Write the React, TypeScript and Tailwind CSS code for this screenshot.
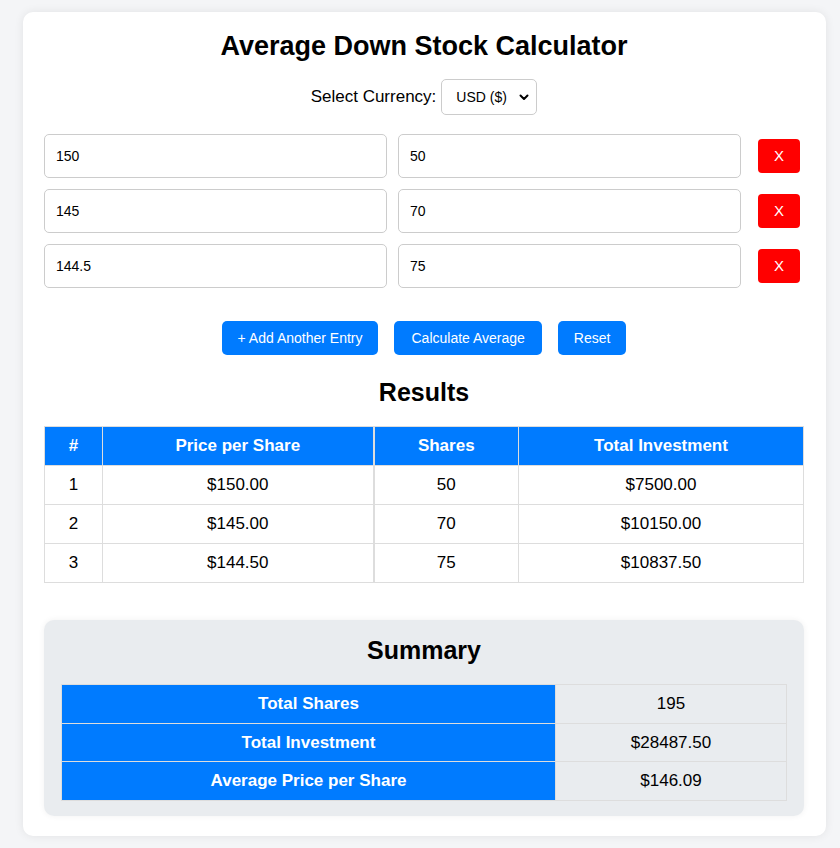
import React from 'react';

const entries = [
  { price: '150', shares: '50' },
  { price: '145', shares: '70' },
  { price: '144.5', shares: '75' },
];

const results = [
  { n: 1, price: '$150.00', shares: 50, total: '$7500.00' },
  { n: 2, price: '$145.00', shares: 70, total: '$10150.00' },
  { n: 3, price: '$144.50', shares: 75, total: '$10837.50' },
];

const summary = [
  { label: 'Total Shares', value: '195' },
  { label: 'Total Investment', value: '$28487.50' },
  { label: 'Average Price per Share', value: '$146.09' },
];

export default function App() {
  return (
    <div
      className="min-h-[848px] bg-[#f4f5f7] pt-[12px] pb-[12px] text-black"
      style={{ fontFamily: '"Liberation Sans", Arial, sans-serif' }}
    >
      <div className="ml-[23px] w-[803px] bg-white rounded-[10px] shadow-[0_0_10px_rgba(0,0,0,0.08)] pl-[21px] pr-[22px] pt-[20px] pb-[20px]">
        <h1 className="text-center text-[27px] font-bold leading-[28px]">Average Down Stock Calculator</h1>

        <div className="flex items-center justify-center gap-[5px] mt-[19px]">
          <span className="text-[17px]">Select Currency:</span>
          <div className="flex items-center justify-between w-[96px] h-[36px] border border-[#ccc] rounded-[5px] pl-[14px] pr-[6px] text-[14px]">
            <span>USD ($)</span>
            <svg width="12" height="12" viewBox="0 0 24 24" fill="none" stroke="black" strokeWidth="4" strokeLinecap="round" strokeLinejoin="round">
              <path d="M5 9l7 7 7-7" />
            </svg>
          </div>
        </div>

        {/* entry rows */}
        <div className="flex flex-col gap-[11px] mt-[19px]">
          {entries.map((e, i) => (
            <div key={i} className="flex items-center pr-[4px]">
              <div className="flex-1 h-[44px] border border-[#ccc] rounded-[5px] flex items-center px-[11px] text-[14px]">{e.price}</div>
              <div className="flex-1 h-[44px] border border-[#ccc] rounded-[5px] flex items-center px-[11px] text-[14px] ml-[11px]">{e.shares}</div>
              <button className="ml-[17px] w-[42px] h-[34px] bg-[#ff0000] text-white rounded-[4px] text-[15px] shrink-0">X</button>
            </div>
          ))}
        </div>

        <div className="flex justify-center gap-[16px] mt-[33px]">
          <button className="h-[34px] px-[16px] bg-[#007bff] text-white text-[14px] rounded-[5px]">+ Add Another Entry</button>
          <button className="h-[34px] px-[17px] bg-[#007bff] text-white text-[14px] rounded-[5px]">Calculate Average</button>
          <button className="h-[34px] px-[16px] bg-[#007bff] text-white text-[14px] rounded-[5px]">Reset</button>
        </div>

        <h2 className="text-center text-[25px] font-bold mt-[23px] leading-[28px]">Results</h2>

        <table className="w-full border-collapse mt-[20px] text-[17px]">
          <thead>
            <tr className="bg-[#007bff] text-white h-[39px]">
              <th className="border border-[#ddd] w-[58px]">#</th>
              <th className="border border-[#ddd] w-[271px]">Price per Share</th>
              <th className="border border-[#ddd] border-l-2 w-[145px]">Shares</th>
              <th className="border border-[#ddd]">Total Investment</th>
            </tr>
          </thead>
          <tbody>
            {results.map((r) => (
              <tr key={r.n} className="h-[39px] text-center">
                <td className="border border-[#ddd]">{r.n}</td>
                <td className="border border-[#ddd]">{r.price}</td>
                <td className="border border-[#ddd] border-l-2">{r.shares}</td>
                <td className="border border-[#ddd]">{r.total}</td>
              </tr>
            ))}
          </tbody>
        </table>

        {/* summary */}
        <div className="mt-[37px] bg-[#e9ecef] rounded-[10px] shadow-[0_0_6px_rgba(0,0,0,0.06)] px-[17px] pt-[16px] pb-[15px]">
          <h2 className="text-center text-[25px] font-bold leading-[28px]">Summary</h2>
          <table className="w-full border-collapse mt-[20px] text-[17px]">
            <tbody>
              {summary.map((s) => (
                <tr key={s.label} className="h-[38.5px]">
                  <th className="border border-[#ddd] bg-[#007bff] text-white w-[494px]">{s.label}</th>
                  <td className="border border-[#ddd] text-center">{s.value}</td>
                </tr>
              ))}
            </tbody>
          </table>
        </div>
      </div>
    </div>
  );
}
